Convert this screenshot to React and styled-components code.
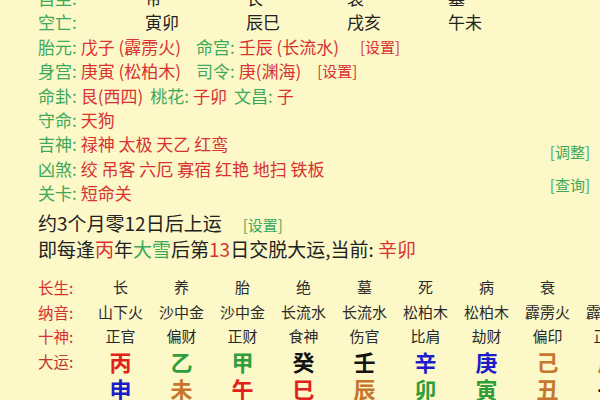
import React from "react";
import styled, { createGlobalStyle } from "styled-components";

const GlobalStyle = createGlobalStyle`
  html, body {
    margin: 0;
    padding: 0;
    background: #fcf8c8;
    overflow: hidden;
  }
  body {
    font-family: "Noto Sans CJK SC", "Noto Sans", sans-serif;
    color: #222;
  }
`;

const GREEN = "#3da85a";
const RED = "#d83232";

const Page = styled.div`
  width: 600px;
  height: 400px;
  overflow: hidden;
  padding-left: 38px;
  box-sizing: border-box;
`;

const Info = styled.div`
  margin-top: -14px;
  font-size: 17px;
  line-height: 24.4px;
`;

const PillarRow = styled.div`
  display: grid;
  grid-template-columns: 107px repeat(4, 101px);
  white-space: nowrap;
`;

const Row = styled.div`
  display: flex;
  align-items: center;
  gap: 7px;
  white-space: nowrap;
  height: 24.4px;
`;

const Group = styled.span`
  display: inline-flex;
  gap: 4px;
  width: ${(p) => (p.$w ? `${p.$w}px` : "auto")};
  flex-shrink: 0;
`;

const Label = styled.span`
  color: ${GREEN};
`;

const Value = styled.span`
  color: ${RED};
`;

const SetLink = styled.span`
  font-size: 15px;
  color: ${(p) => p.$color || RED};
  margin-left: ${(p) => p.$gap || 0}px;
`;

const Block = styled.div`
  display: flex;
  justify-content: space-between;
  padding-right: 10px;
`;

const SideLinks = styled.div`
  display: flex;
  flex-direction: column;
  gap: 9px;
  padding-top: 32px;
  font-size: 15px;
  line-height: 24px;
  color: ${GREEN};
`;

const Luck = styled.div`
  margin-top: 5px;
  font-size: 19px;
  line-height: 24.5px;
  white-space: nowrap;
`;

const Tint = styled.span`
  color: ${(p) => p.$c};
`;

const Table = styled.div`
  margin-top: 13px;
  display: grid;
  grid-template-columns: 52px repeat(9, 61px);
  grid-template-rows: 24.7px 24.7px 24.7px 24.7px 30px;
  align-items: center;
  justify-items: center;
  font-size: 15px;
  line-height: 20px;
  white-space: nowrap;
`;

const RowLabel = styled.span`
  justify-self: start;
  font-size: 15.5px;
  color: ${(p) => (p.$dark ? "#c03a2e" : "#d83030")};
`;

const Cell = styled.span`
  color: #2a2a2a;
`;

const Big = styled.span`
  font-size: 22px;
  line-height: 22px;
  font-weight: 700;
  color: ${(p) => p.$c};
`;

const C = {
  red: "#e2201c",
  green: "#2e9e3c",
  black: "#141414",
  blue: "#1c1cc8",
  brown: "#c8752e",
};

const stems = [
  ["丙", C.red], ["乙", C.green], ["甲", C.green], ["癸", C.black], ["壬", C.black],
  ["辛", C.blue], ["庚", C.blue], ["己", C.brown], ["戊", C.brown],
];
const branches = [
  ["申", C.blue], ["未", C.brown], ["午", C.red], ["巳", C.red], ["辰", C.brown],
  ["卯", C.green], ["寅", C.green], ["丑", C.brown], ["子", C.black],
];
const changsheng = ["长", "养", "胎", "绝", "墓", "死", "病", "衰", "帝"];
const nayin = ["山下火", "沙中金", "沙中金", "长流水", "长流水", "松柏木", "松柏木", "霹雳火", "霹雳火"];
const shishen = ["正官", "偏财", "正财", "食神", "伤官", "比肩", "劫财", "偏印", "正印"];

export default function App() {
  return (
    <>
      <GlobalStyle />
      <Page>
        <Info>
          <PillarRow>
            <Label>自坐:</Label>
            <span>帝</span>
            <span>长</span>
            <span>衰</span>
            <span>墓</span>
          </PillarRow>
          <PillarRow>
            <Label>空亡:</Label>
            <span>寅卯</span>
            <span>辰巳</span>
            <span>戌亥</span>
            <span>午未</span>
          </PillarRow>
          <Row>
            <Group $w={151}>
              <Label>胎元:</Label>
              <Value>戊子 (霹雳火)</Value>
            </Group>
            <Group>
              <Label>命宫:</Label>
              <Value>壬辰 (长流水)</Value>
            </Group>
            <SetLink $gap={14}>[设置]</SetLink>
          </Row>
          <Row>
            <Group $w={151}>
              <Label>身宫:</Label>
              <Value>庚寅 (松柏木)</Value>
            </Group>
            <Group>
              <Label>司令:</Label>
              <Value>庚(渊海)</Value>
            </Group>
            <SetLink $gap={9}>[设置]</SetLink>
          </Row>
          <Row>
            <Group>
              <Label>命卦:</Label>
              <Value>艮(西四)</Value>
            </Group>
            <Group>
              <Label>桃花:</Label>
              <Value>子卯</Value>
            </Group>
            <Group>
              <Label>文昌:</Label>
              <Value>子</Value>
            </Group>
          </Row>
          <Block>
            <div>
              <Row>
                <Group>
                  <Label>守命:</Label>
                  <Value>天狗</Value>
                </Group>
              </Row>
              <Row>
                <Group>
                  <Label>吉神:</Label>
                  <Value>禄神 太极 天乙 红鸾</Value>
                </Group>
              </Row>
              <Row>
                <Group>
                  <Label>凶煞:</Label>
                  <Value>绞 吊客 六厄 寡宿 红艳 地扫 铁板</Value>
                </Group>
              </Row>
              <Row>
                <Group>
                  <Label>关卡:</Label>
                  <Value>短命关</Value>
                </Group>
              </Row>
            </div>
            <SideLinks>
              <span>[调整]</span>
              <span>[查询]</span>
            </SideLinks>
          </Block>
        </Info>

        <Luck>
          <div>
            约3个月零12日后上运
            <SetLink $color={GREEN} $gap={21}>[设置]</SetLink>
          </div>
          <div>
            即每逢<Tint $c={RED}>丙</Tint>年<Tint $c={GREEN}>大雪</Tint>后第
            <Tint $c={RED}>13</Tint>日交脱大运,当前: <Tint $c={RED}>辛卯</Tint>
          </div>
        </Luck>

        <Table>
          <RowLabel>长生:</RowLabel>
          {changsheng.map((v, i) => (
            <Cell key={`cs${i}`}>{v}</Cell>
          ))}
          <RowLabel>纳音:</RowLabel>
          {nayin.map((v, i) => (
            <Cell key={`ny${i}`}>{v}</Cell>
          ))}
          <RowLabel>十神:</RowLabel>
          {shishen.map((v, i) => (
            <Cell key={`ss${i}`}>{v}</Cell>
          ))}
          <RowLabel $dark>大运:</RowLabel>
          {stems.map(([v, c], i) => (
            <Big key={`st${i}`} $c={c}>{v}</Big>
          ))}
          <span />
          {branches.map(([v, c], i) => (
            <Big key={`br${i}`} $c={c}>{v}</Big>
          ))}
        </Table>
      </Page>
    </>
  );
}
